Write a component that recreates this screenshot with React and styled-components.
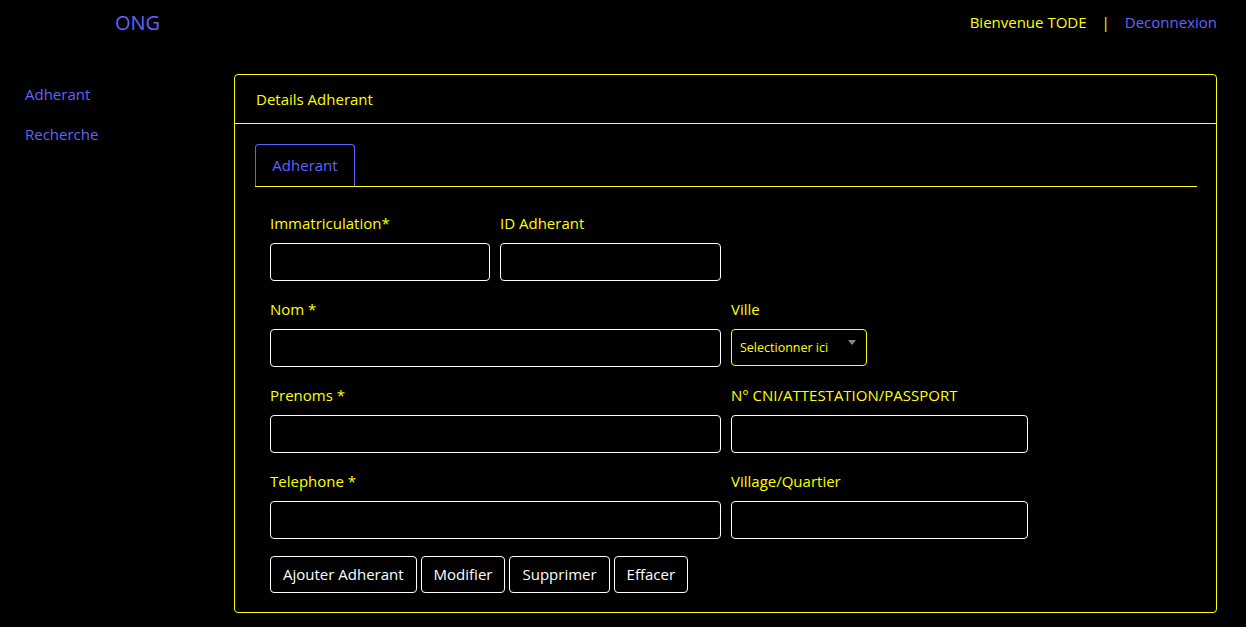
import React from "react";
import styled, { createGlobalStyle } from "styled-components";

const GlobalStyle = createGlobalStyle`
  body {
    margin: 0;
    background: #000;
    font-family: "Open Sans", "Noto Sans", sans-serif;
  }
`;

const YELLOW = "#ffff00";
const BLUE = "#6262ff";

const fields = [
  { label: "Immatriculation*", col: "1 / 2" },
  { label: "ID Adherant", col: "2 / 3" },
  { label: "Nom *", col: "1 / 3" },
  { label: "Ville", col: "3 / 4", select: true },
  { label: "Prenoms *", col: "1 / 3" },
  { label: "N° CNI/ATTESTATION/PASSPORT", col: "3 / 4" },
  { label: "Telephone *", col: "1 / 3" },
  { label: "Village/Quartier", col: "3 / 4" },
];

const App = () => {
  return (
    <>
      <GlobalStyle />
      <Header>
        <Brand>ONG</Brand>
        <UserBox>
          <Welcome>Bienvenue TODE</Welcome>
          <Separator>|</Separator>
          <Link href="#">Deconnexion</Link>
        </UserBox>
      </Header>
      <Main>
        <Sidebar>
          <SideLink href="#">Adherant</SideLink>
          <SideLink href="#">Recherche</SideLink>
        </Sidebar>
        <Card>
          <CardHeader>Details Adherant</CardHeader>
          <CardBody>
            <Tabs>
              <Tab>Adherant</Tab>
            </Tabs>
            <Form>
              {fields.map((f) => (
                <Field key={f.label} col={f.col}>
                  <Label>{f.label}</Label>
                  {f.select ? (
                    <Select>
                      <span>Selectionner ici</span>
                      <Arrow />
                    </Select>
                  ) : (
                    <Input />
                  )}
                </Field>
              ))}
              <Actions>
                <Button>Ajouter Adherant</Button>
                <Button>Modifier</Button>
                <Button>Supprimer</Button>
                <Button>Effacer</Button>
              </Actions>
            </Form>
          </CardBody>
        </Card>
      </Main>
    </>
  );
};

export default App;

const Header = styled.header`
  height: 44px;
  display: flex;
  justify-content: space-between;
  align-items: center;
  padding: 0 29px 0 115px;
`;

const Brand = styled.div`
  color: ${BLUE};
  font-size: 20px;
`;

const UserBox = styled.div`
  display: flex;
  align-items: center;
  gap: 15px;
  font-size: 15px;
`;

const Welcome = styled.span`
  color: ${YELLOW};
`;

const Separator = styled.span`
  color: ${YELLOW};
`;

const Link = styled.a`
  color: ${BLUE};
  text-decoration: none;
`;

const Main = styled.div`
  display: flex;
  padding-top: 30px;
`;

const Sidebar = styled.nav`
  width: 234px;
  flex-shrink: 0;
  display: flex;
  flex-direction: column;
  gap: 19px;
  padding: 10px 0 0 25px;
  box-sizing: border-box;
`;

const SideLink = styled.a`
  color: ${BLUE};
  font-size: 15px;
  line-height: 21px;
  text-decoration: none;
`;

const Card = styled.section`
  width: 983px;
  border: 1px solid ${YELLOW};
  border-radius: 4px;
  box-sizing: border-box;
`;

const CardHeader = styled.div`
  height: 48px;
  display: flex;
  align-items: center;
  padding-left: 21px;
  color: ${YELLOW};
  font-size: 15px;
  border-bottom: 1px solid ${YELLOW};
`;

const CardBody = styled.div`
  padding: 20px 19px 19px 20px;
`;

const Tabs = styled.div`
  display: flex;
  border-bottom: 1px solid ${YELLOW};
`;

const Tab = styled.div`
  width: 100px;
  height: 42px;
  box-sizing: border-box;
  display: flex;
  align-items: center;
  justify-content: center;
  padding-bottom: 2px;
  color: ${BLUE};
  font-size: 15px;
  border: 1px solid ${BLUE};
  border-bottom: none;
  border-radius: 4px 4px 0 0;
`;

const Form = styled.div`
  display: grid;
  grid-template-columns: 220px 221px 297px;
  column-gap: 10px;
  row-gap: 18px;
  padding: 26px 15px 0;
`;

const Field = styled.div`
  grid-column: ${(p) => p.col};
  display: flex;
  flex-direction: column;
  align-items: flex-start;
`;

const Label = styled.label`
  color: ${YELLOW};
  font-size: 15px;
  line-height: 20px;
  margin-bottom: 10px;
`;

const Input = styled.input`
  width: 100%;
  height: 38px;
  box-sizing: border-box;
  background: #000;
  border: 1px solid #fff;
  border-radius: 4px;
  color: #fff;
  outline: none;
`;

const Select = styled.div`
  position: relative;
  width: 136px;
  height: 37px;
  box-sizing: border-box;
  border: 1px solid ${YELLOW};
  border-radius: 4px;
  color: ${YELLOW};
  font-size: 12.5px;
  display: flex;
  align-items: center;
  padding: 0 0 1px 8px;
`;

const Arrow = styled.span`
  position: absolute;
  top: 10px;
  right: 10px;
  border-left: 4px solid transparent;
  border-right: 4px solid transparent;
  border-top: 5px solid #888;
`;

const Actions = styled.div`
  grid-column: 1 / 4;
  display: flex;
  gap: 4px;
  margin-top: -1px;
`;

const Button = styled.button`
  height: 37px;
  padding: 0 12px 2px;
  background: #000;
  color: #fff;
  border: 1px solid #fff;
  border-radius: 4px;
  font-family: inherit;
  font-size: 15px;
`;
